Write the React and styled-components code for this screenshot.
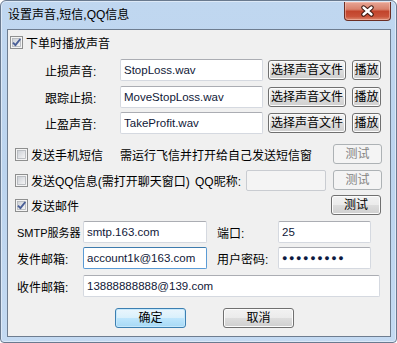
import React from "react";
import styled, { createGlobalStyle } from "styled-components";

const GlobalStyle = createGlobalStyle`
  html, body {
    margin: 0;
    padding: 0;
  }
  body {
    background: #ffffff;
    font-family: "Liberation Sans", "Noto Sans CJK SC", sans-serif;
  }
`;

const Frame = styled.div`
  width: 397px;
  height: 343px;
  box-sizing: border-box;
  border: 1px solid #6a7a8f;
  border-radius: 6px 6px 4px 4px;
  background: linear-gradient(to bottom, #c0d7f0 0%, #bcd4ee 50%, #c4daf2 100%);
  box-shadow: inset 0 0 0 1px #dde9f7;
  display: flex;
  flex-direction: column;
  overflow: hidden;
`;

const TitleBar = styled.div`
  height: 28px;
  display: flex;
  align-items: flex-start;
  padding-left: 7px;
  flex-shrink: 0;
`;

const Title = styled.div`
  line-height: 28px;
  font-size: 12px;
  color: #000;
  white-space: nowrap;
`;

const CloseButton = styled.div`
  margin-left: auto;
  margin-right: 5px;
  margin-top: 1px;
  width: 47px;
  height: 19px;
  box-sizing: border-box;
  border: 1px solid #6b2e24;
  border-top: none;
  border-radius: 0 0 4px 4px;
  background: linear-gradient(
    to bottom,
    #e7a595 0%,
    #d9826d 40%,
    #c2442c 52%,
    #c95239 80%,
    #dc8a70 100%
  );
  box-shadow: inset 0 0 0 1px rgba(255, 210, 200, 0.45);
  display: flex;
  align-items: center;
  justify-content: center;
`;

const Client = styled.div`
  margin: 0 5px 5px 6px;
  flex: 1;
  background: #f0f0f0;
  border: 1px solid #6e7d90;
  display: flex;
  flex-direction: column;
`;

const Row = styled.div`
  display: flex;
  align-items: center;
  flex-shrink: 0;
  height: ${(p) => p.$h || 22}px;
  margin-top: ${(p) => p.$mt || 0}px;
  padding-left: ${(p) => p.$pl || 0}px;
  padding-right: ${(p) => p.$pr || 0}px;
`;

const Label = styled.span`
  width: ${(p) => (p.$w ? `${p.$w}px` : "auto")};
  margin-left: ${(p) => p.$ml || 0}px;
  flex-shrink: 0;
  font-size: ${(p) => (p.$small ? 11 : 12)}px;
  color: #000;
  white-space: nowrap;
`;

const Check = styled.label`
  display: flex;
  align-items: center;
  gap: 3px;
  width: ${(p) => (p.$w ? `${p.$w}px` : "auto")};
  flex-shrink: 0;
  font-size: 12px;
  color: #000;
  white-space: nowrap;
`;

const TextBox = styled.input`
  width: ${(p) => p.$w}px;
  height: ${(p) => p.$h || 22}px;
  margin-left: ${(p) => p.$ml || 0}px;
  box-sizing: border-box;
  flex-shrink: 0;
  padding: 0 3px;
  border: 1px solid #d5d9e0;
  border-top-color: #abadb3;
  border-radius: 2px;
  background: #ffffff;
  font-family: "Liberation Sans", "Noto Sans CJK SC", sans-serif;
  font-size: 11.5px;
  color: #101838;
  outline: none;

  ${(p) =>
    p.$focused &&
    `
    border-color: #5b9bd5;
    border-top-color: #3d7bad;
  `}

  &:disabled {
    background: #f4f4f4;
    border-color: #c9ccd1;
  }
`;

const Dots = styled(TextBox)`
  font-size: 9px;
  letter-spacing: 1.6px;
  color: #0d1a40;
`;

const Button = styled.button`
  width: ${(p) => p.$w}px;
  height: ${(p) => p.$h || 20}px;
  margin-left: ${(p) => (p.$auto ? "auto" : `${p.$ml || 0}px`)};
  box-sizing: border-box;
  flex-shrink: 0;
  padding: 0;
  border: 1px solid #707070;
  border-radius: 3px;
  background: linear-gradient(
    to bottom,
    #f2f2f2 0%,
    #ebebeb 50%,
    #dddddd 51%,
    #cfcfcf 100%
  );
  box-shadow: inset 0 0 0 1px #fcfcfc;
  font-family: "Liberation Sans", "Noto Sans CJK SC", sans-serif;
  font-size: 12px;
  color: #000;
  line-height: 1;

  ${(p) =>
    p.$default &&
    `
    border-color: #3c7fb1;
    background: linear-gradient(to bottom, #eaf6fd 0%, #d9f0fc 50%, #bee6fd 51%, #a7d9f5 100%);
    box-shadow: inset 0 0 0 1px #c5e8fc;
  `}

  &:disabled {
    border-color: #adb2b5;
    background: #f4f4f4;
    box-shadow: none;
    color: #838383;
  }
`;

const CloseGlyph = () => (
  <svg width="15" height="12" viewBox="0 0 15 12">
    <path d="M3.5 2.5 L11.5 9.5 M11.5 2.5 L3.5 9.5" stroke="#3a1710" strokeWidth="4.4" strokeLinecap="round" />
    <path d="M3.5 2.5 L11.5 9.5 M11.5 2.5 L3.5 9.5" stroke="#ffffff" strokeWidth="2.4" strokeLinecap="round" />
  </svg>
);

const Box = ({ checked }) => (
  <svg width="13" height="13" viewBox="0 0 13 13">
    <defs>
      <linearGradient id="cbg" x1="0" y1="0" x2="1" y2="1">
        <stop offset="0" stopColor="#cbcfd5" />
        <stop offset="1" stopColor="#f7f7f7" />
      </linearGradient>
    </defs>
    <rect x="0.5" y="0.5" width="12" height="12" fill="#f4f4f4" stroke="#8e8f8f" />
    <rect x="2.5" y="2.5" width="8" height="8" fill="url(#cbg)" stroke="#b0b3b8" strokeWidth="0.8" />
    {checked && (
      <path
        d="M3 6.6 L5.4 9.2 L10.3 3"
        fill="none"
        stroke="#4a5f97"
        strokeWidth="1.9"
        strokeLinejoin="round"
      />
    )}
  </svg>
);

const soundRows = [
  { label: "止损声音:", file: "StopLoss.wav", mt: 4 },
  { label: "跟踪止损:", file: "MoveStopLoss.wav", mt: 5 },
  { label: "止盈声音:", file: "TakeProfit.wav", mt: 4 },
];

const App = () => {
  return (
    <>
      <GlobalStyle />
      <Frame>
        <TitleBar>
          <Title>设置声音,短信,QQ信息</Title>
          <CloseButton>
            <CloseGlyph />
          </CloseButton>
        </TitleBar>
        <Client>
          <Row $h={25} $pl={2}>
            <Check>
              <Box checked />
              下单时播放声音
            </Check>
          </Row>

          {soundRows.map((r) => (
            <Row key={r.label} $mt={r.mt} $pl={37}>
              <Label $w={75}>{r.label}</Label>
              <TextBox $w={143} defaultValue={r.file} />
              <Button $w={78} $ml={5}>选择声音文件</Button>
              <Button $w={29} $ml={6}>播放</Button>
            </Row>
          ))}

          <Row $mt={9} $pl={7} $pr={8}>
            <Check $w={105}>
              <Box />
              发送手机短信
            </Check>
            <Label>需运行飞信并打开给自己发送短信窗</Label>
            <Button $w={49} $auto disabled>测试</Button>
          </Row>

          <Row $mt={4} $pl={7} $pr={8}>
            <Check $w={180}>
              <Box />
              发送QQ信息(需打开聊天窗口)
            </Check>
            <Label $w={51}>QQ昵称:</Label>
            <TextBox $w={80} $h={21} disabled />
            <Button $w={49} $auto disabled>测试</Button>
          </Row>

          <Row $mt={3} $pl={7} $pr={9}>
            <Check>
              <Box checked />
              发送邮件
            </Check>
            <Button $w={50} $auto>测试</Button>
          </Row>

          <Row $mt={5} $pl={9}>
            <Label $w={66} $small>SMTP服务器</Label>
            <TextBox $w={124} defaultValue="smtp.163.com" />
            <Label $w={61} $ml={10}>端口:</Label>
            <TextBox $w={93} defaultValue="25" />
          </Row>

          <Row $mt={4} $pl={9}>
            <Label $w={66}>发件邮箱:</Label>
            <TextBox $w={124} $focused defaultValue="account1k@163.com" />
            <Label $w={61} $ml={10}>用户密码:</Label>
            <Dots $w={93} defaultValue="●●●●●●●●●" />
          </Row>

          <Row $mt={6} $pl={9}>
            <Label $w={66}>收件邮箱:</Label>
            <TextBox $w={297} defaultValue="13888888888@139.com" />
          </Row>

          <Row $mt={11} $h={20} $pl={107}>
            <Button $w={71} $default>确定</Button>
            <Button $w={71} $ml={37}>取消</Button>
          </Row>
        </Client>
      </Frame>
    </>
  );
};

export default App;
